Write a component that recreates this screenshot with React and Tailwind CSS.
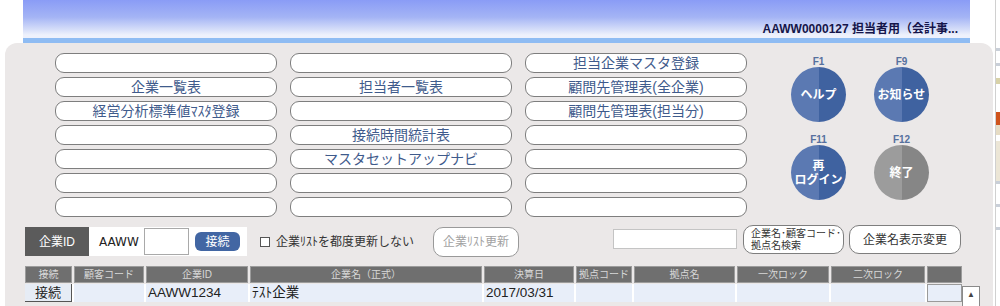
import React from 'react';

const menuCols = [
  ['', '企業一覧表', '経営分析標準値ﾏｽﾀ登録', '', '', '', ''],
  ['', '担当者一覧表', '', '接続時間統計表', 'マスタセットアップナビ', '', ''],
  ['担当企業マスタ登録', '顧問先管理表(全企業)', '顧問先管理表(担当分)', '', '', '', ''],
];

const columns = [
  { label: '接続', w: 'w-[47px]' },
  { label: '顧客コード', w: 'w-[70px]' },
  { label: '企業ID', w: 'w-[102px]' },
  { label: '企業名（正式）', w: 'w-[232px]' },
  { label: '決算日', w: 'w-[90px]' },
  { label: '拠点コード', w: 'w-[56px]' },
  { label: '拠点名', w: 'w-[101px]' },
  { label: '一次ロック', w: 'w-[92px]' },
  { label: '二次ロック', w: 'w-[94px]' },
  { label: '', w: 'w-[35px]' },
];

const rowValues = ['接続', '', 'AAWW1234', 'ﾃｽﾄ企業', '2017/03/31', '', '', '', '', ''];

const FnButton = ({ fkey, grey, children }) => (
  <div className="flex flex-col items-center">
    <div className="h-[11px] text-[10px] leading-[11px] font-bold text-[#56709e]">{fkey}</div>
    <div
      className={`w-[55px] h-[55px] rounded-full flex items-center justify-center text-center text-white font-bold text-[12px] leading-[14px] ${
        grey
          ? 'bg-[linear-gradient(to_right,#9c9c9c_50%,#868686_50%)]'
          : 'bg-[linear-gradient(to_right,#5b79b2_50%,#3f62a0_50%)]'
      }`}
    >
      {children}
    </div>
  </div>
);

const App = () => {
  return (
    <div className="w-[1000px] h-[306px] overflow-hidden bg-white flex font-['Liberation_Sans','Noto_Sans_CJK_JP',sans-serif]">
      <div className="w-[995px] flex flex-col">
        {/* header band */}
        <div className="ml-[23px] w-[947px] h-[43px] flex flex-col">
          <div className="h-[38px] flex items-end justify-end pr-[12px] pb-[3px] bg-[linear-gradient(to_bottom,#8a9cf6_0%,#a4b4f5_45%,#d6def9_78%,#eef1fc_92%)]">
            <span className="text-[12px] leading-[12px] font-bold text-[#15154a]">AAWW0000127 担当者用（会計事...</span>
          </div>
          <div className="h-[5px] bg-[#8fbcf3]" />
        </div>

        {/* main panel */}
        <div className="ml-[5px] w-[988px] flex-1 bg-[#ebe8e8] rounded-t-[12px] flex flex-col">
          <div className="flex items-start pt-[10px] pl-[50px]">
            <div className="flex gap-x-[13px]">
              {menuCols.map((col, ci) => (
                <div key={ci} className="flex flex-col gap-y-[4px]">
                  {col.map((label, ri) => (
                    <div
                      key={ri}
                      className="w-[222px] h-[20px] rounded-[9px] border border-[#7e7e7e] bg-white flex items-center justify-center text-[14px] leading-[14px] text-[#3f5b8c]"
                    >
                      {label}
                    </div>
                  ))}
                </div>
              ))}
            </div>
            <div className="ml-[44px] mt-[3px] grid grid-cols-[55px_55px] content-start gap-x-[28px] gap-y-[12px]">
              <FnButton fkey="F1">ヘルプ</FnButton>
              <FnButton fkey="F9">お知らせ</FnButton>
              <FnButton fkey="F11">
                再<br />ログイン
              </FnButton>
              <FnButton fkey="F12" grey>
                終了
              </FnButton>
            </div>
          </div>

          {/* toolbar */}
          <div className="flex items-start mt-[8px] h-[32px]">
            <div className="ml-[20px] mt-[2px] w-[222px] h-[29px] flex">
              <div className="w-[64px] bg-[#5b5b5b] text-white text-[12px] flex items-center justify-center">企業ID</div>
              <div className="flex-1 bg-white flex items-center">
                <span className="ml-[10px] w-[45px] text-[12px] text-[#222] font-['DejaVu_Sans',sans-serif]">AAWW</span>
                <div className="w-[45px] h-[27px] border border-[#a9a9a9] bg-white" />
                <div className="ml-[6px] w-[45px] h-[19px] rounded-[6px] bg-[#4266a3] text-white text-[12px] flex items-center justify-center">
                  接続
                </div>
              </div>
            </div>
            <div className="ml-[13px] w-[173px] h-[29px] mt-[2px] flex items-center">
              <div className="w-[10px] h-[10px] border border-[#555] bg-white" />
              <span className="ml-[6px] text-[12px] text-[#333]">企業ﾘｽﾄを都度更新しない</span>
            </div>
            <div className="mt-[2px] w-[86px] h-[30px] rounded-[10px] border border-[#999] bg-white text-[12px] text-[#a2a2a2] flex items-center justify-center">
              企業ﾘｽﾄ更新
            </div>
            <div className="ml-[94px] mt-[4px] w-[124px] h-[20px] border border-[#c4c4c4] bg-white" />
            <div className="ml-[6px] w-[101px] h-[29px] rounded-[10px] border border-[#7e7e7e] bg-white text-[10px] leading-[12px] text-[#333] flex flex-col justify-center pl-[7px] whitespace-nowrap">
              <span>企業名･顧客コード･</span>
              <span>拠点名検索</span>
            </div>
            <div className="ml-[5px] w-[112px] h-[29px] rounded-[10px] border border-[#7e7e7e] bg-white text-[12px] text-[#333] flex items-center justify-center">
              企業名表示変更
            </div>
          </div>

          {/* table */}
          <div className="ml-[20px] mt-[9px] flex flex-col">
            <div className="flex gap-[2px] h-[17px]">
              {columns.map((c, i) => (
                <div
                  key={i}
                  className={`${c.w} h-full bg-[#6f6f6f] border border-[#9c9c9c] text-[10px] leading-[15px] text-[#d8d8d8] text-center whitespace-nowrap overflow-hidden`}
                >
                  {c.label}
                </div>
              ))}
            </div>
            {[0, 1].map((r) => (
              <div key={r} className="flex mt-[1px]">
                <div className="flex gap-[2px] h-[18px] bg-white">
                  {columns.map((c, i) => (
                    <div
                      key={i}
                      className={`${c.w} h-full flex items-center text-[13.5px] text-[#222] ${
                        i === 0
                          ? 'bg-[#e6ecf5] border-r border-b border-[#555] justify-center text-[13px]'
                          : i === 9
                          ? 'bg-[#e8eef9] border border-[#9a9a9a]'
                          : 'bg-[#e8eef9] pl-[2px]'
                      }`}
                    >
                      {r === 0 ? rowValues[i] : ''}
                    </div>
                  ))}
                </div>
                {r === 0 && (
                  <div className="mt-[2px] w-[18px] h-[22px] border border-[#8a8a8a] bg-white flex justify-center pt-[4px]">
                    <span className="text-[8px] leading-[8px] text-[#444]">▲</span>
                  </div>
                )}
              </div>
            ))}
          </div>
        </div>
      </div>

      {/* window behind, right edge */}
      <div className="flex-1 flex flex-col bg-white border-l border-[#d0d0d0]">
        <div className="h-[48px]" />
        <div className="h-[3px] bg-[#c9cfd8]" />
        <div className="h-[12px]" />
        <div className="h-[3px] bg-[#c9cfd8]" />
        <div className="h-[12px]" />
        <div className="h-[6px] bg-[#d8d2a8]" />
        <div className="h-[28px]" />
        <div className="h-[13px] bg-[#cf531b]" />
        <div className="h-[10px] bg-[#e6dcc4]" />
        <div className="h-[6px]" />
        <div className="h-[40px] bg-[#ece6d6]" />
        <div className="h-[3px] bg-[#c9cfd8]" />
        <div className="h-[20px]" />
        <div className="h-[3px] bg-[#c9cfd8]" />
        <div className="h-[20px]" />
        <div className="h-[3px] bg-[#c9cfd8]" />
      </div>
    </div>
  );
};

export default App;
